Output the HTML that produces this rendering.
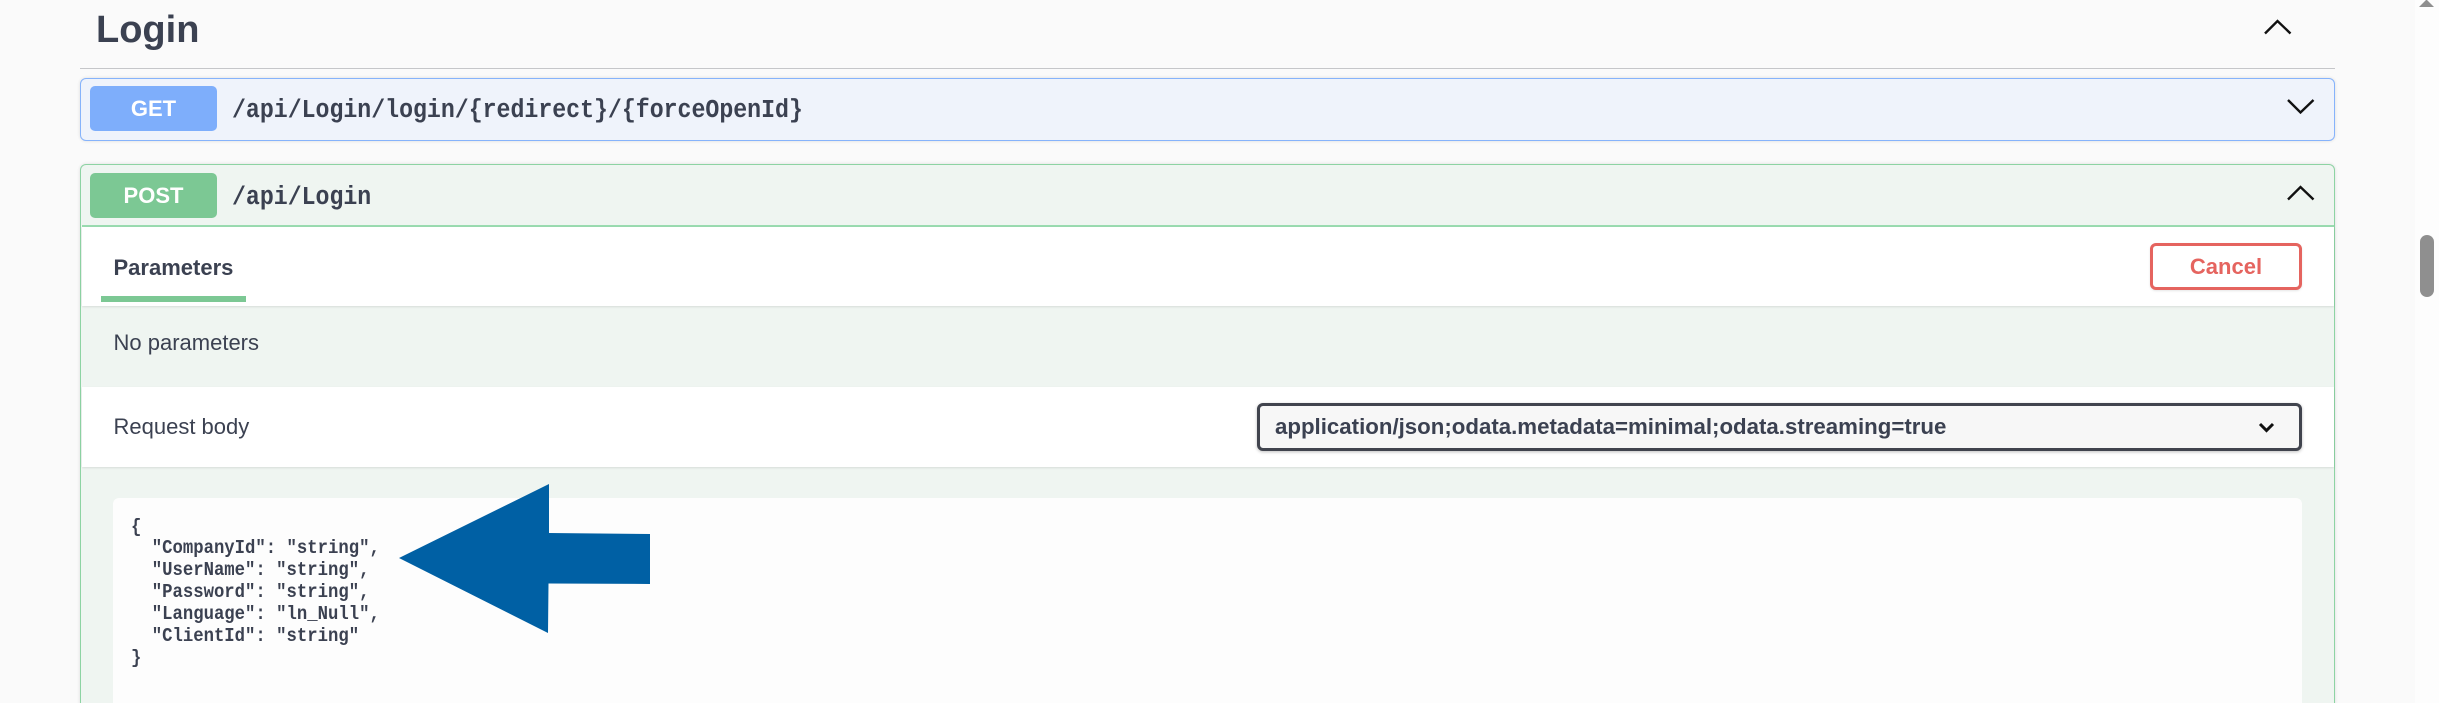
<!DOCTYPE html>
<html lang="en">
<head>
<meta charset="utf-8">
<title>Login</title>
<style>
html,body{margin:0;padding:0;width:2439px;height:703px;overflow:hidden;background:#fafafa}
body{position:relative;font-family:"Liberation Sans",sans-serif;color:#3b4151}
.a{position:absolute;box-sizing:border-box}
.t{position:absolute;white-space:pre;line-height:1}
.m{font-family:"Liberation Mono",monospace;font-weight:bold;transform:scaleX(.886);transform-origin:0 0}
svg{position:absolute;left:0;top:0}
</style>
</head>
<body>
<div class="a" style="left:2415px;top:0;width:24px;height:703px;background:#fdfdfd"></div>
<div class="a" style="left:2420px;top:235px;width:14px;height:62px;border-radius:7px;background:#8f8f8f"></div>

<div class="t" style="left:96px;top:10px;font-size:38px;font-weight:bold;line-height:40px">Login</div>
<div class="a" style="left:80px;top:67.5px;width:2255px;height:1.5px;background:#c5c6c9"></div>

<!-- GET -->
<div class="a" style="left:80px;top:77.5px;width:2255px;height:63px;background:#eff3fb;border:1.5px solid #86b3fb;border-radius:6px;box-shadow:0 0 3px rgba(0,0,0,.12)"></div>
<div class="a" style="left:90px;top:86px;width:127px;height:45px;background:#7eaefb;border-radius:5px"></div>
<div class="t" style="left:90px;top:86px;width:127px;height:45px;line-height:45px;text-align:center;font-size:22px;font-weight:bold;color:#fff">GET</div>
<div class="t m" style="left:232px;top:96px;font-size:26.2px;line-height:28px">/api/Login/login/{redirect}/{forceOpenId}</div>

<!-- POST -->
<div class="a" style="left:80px;top:164px;width:2255px;height:560px;background:#eff5f1;border:1.5px solid #8dd3a3;border-radius:6px;box-shadow:0 0 3px rgba(0,0,0,.12)"></div>
<div class="a" style="left:90px;top:173px;width:127px;height:45px;background:#7cc894;border-radius:5px"></div>
<div class="t" style="left:90px;top:173px;width:127px;height:45px;line-height:45px;text-align:center;font-size:22px;font-weight:bold;color:#fff">POST</div>
<div class="t m" style="left:232px;top:183px;font-size:26.2px;line-height:28px">/api/Login</div>

<!-- Tabs band -->
<div class="a" style="left:81.5px;top:225px;width:2252px;height:2px;background:#9adbb0"></div>
<div class="a" style="left:81.5px;top:227px;width:2252px;height:79px;background:#fff;box-shadow:0 1px 2px rgba(0,0,0,.1)"></div>
<div class="t" style="left:113.5px;top:255px;font-size:22px;font-weight:bold;line-height:25px">Parameters</div>
<div class="a" style="left:100.5px;top:296px;width:145.5px;height:6px;background:#7cc894"></div>
<div class="a" style="left:2150px;top:243px;width:152px;height:47px;background:#fff;border:3px solid #e5645f;border-radius:6px;box-shadow:0 1px 2px rgba(0,0,0,.1)"></div>
<div class="t" style="left:2150px;top:243px;width:152px;height:47px;line-height:47px;text-align:center;font-size:22px;font-weight:bold;color:#e5645f">Cancel</div>

<div class="t" style="left:113.5px;top:330px;font-size:22px;line-height:25px">No parameters</div>

<!-- Request body band -->
<div class="a" style="left:81.5px;top:387px;width:2252px;height:80px;background:#fff;box-shadow:0 1px 2px rgba(0,0,0,.1)"></div>
<div class="t" style="left:113.5px;top:414px;font-size:22px;line-height:25px">Request body</div>
<div class="a" style="left:1257px;top:402.5px;width:1045px;height:48px;background:#f7f7f7;border:3px solid #41444e;border-radius:6px;box-shadow:0 1px 3px rgba(0,0,0,.25)"></div>
<div class="t" style="left:1275px;top:414px;font-size:22.25px;font-weight:bold;line-height:25px">application/json;odata.metadata=minimal;odata.streaming=true</div>

<!-- Code box -->
<div class="a" style="left:113px;top:498px;width:2189px;height:220px;background:#fdfdfd;border-radius:6px"></div>
<pre class="t m" style="left:130.5px;top:516.5px;margin:0;font-size:19.5px;line-height:21.85px">{
  "CompanyId": "string",
  "UserName": "string",
  "Password": "string",
  "Language": "ln_Null",
  "ClientId": "string"
}</pre>

<svg width="2439" height="703" viewBox="0 0 2439 703">
  <path d="M2419 7 L2434 7 L2430 3 L2427 0 L2426 0 L2423 3 Z" fill="#8f8f8f"/>
  <g fill="none" stroke="#111" stroke-width="2.4">
    <path d="M2265 33.5 L2277.5 21 L2290.5 33.5"/>
    <path d="M2288 100 L2300.5 112.5 L2313.5 100"/>
    <path d="M2288 199.5 L2300.5 187 L2313.5 199.5"/>
  </g>
  <path d="M2260 424 L2266.5 430.5 L2273 424" fill="none" stroke="#111" stroke-width="3"/>
  <path d="M399 558 L549 484 L549 533 L650 534 L650 584 L548.5 583.5 L548 633 Z" fill="#0060a4"/>
</svg>
</body>
</html>
